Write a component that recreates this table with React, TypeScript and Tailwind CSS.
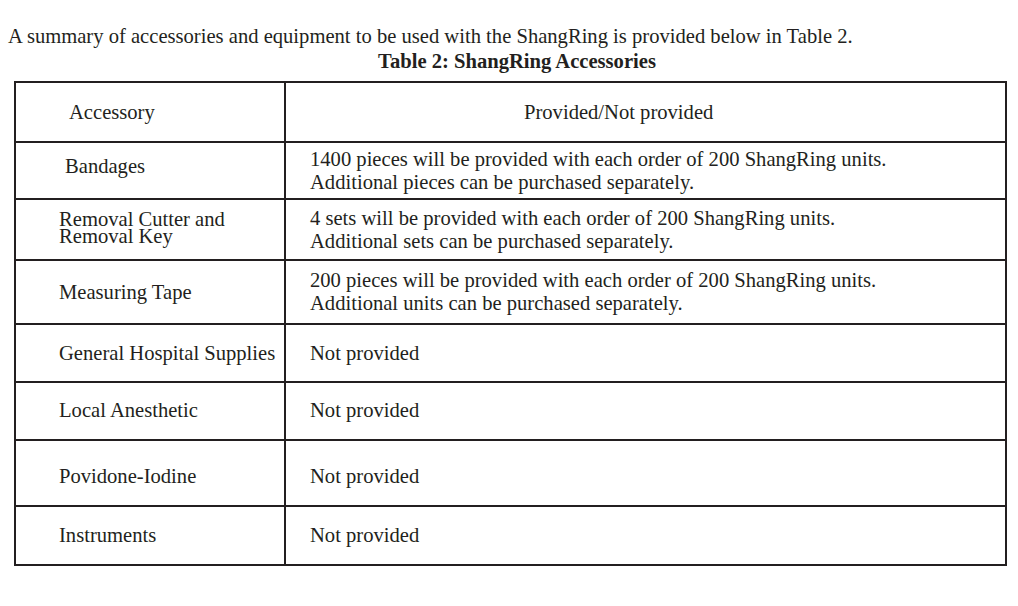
import React from "react";

const rows: { h: string; left: React.ReactNode; right: React.ReactNode; lp: string; shift?: string }[] = [
  { h: "h-[57px]", lp: "pl-[49px]", left: <span className="relative -top-[4px]">Bandages</span>, right: (<><div>1400 pieces will be provided with each order of 200 ShangRing units.</div><div>Additional pieces can be purchased separately.</div></>) },
  { h: "h-[61px]", lp: "pl-[43px]", left: (<div className="leading-[17px] relative -top-[2px]"><div>Removal Cutter and</div><div>Removal Key</div></div>), right: (<><div>4 sets will be provided with each order of 200 ShangRing units.</div><div>Additional sets can be purchased separately.</div></>) },
  { h: "h-[64px]", lp: "pl-[43px]", left: "Measuring Tape", right: (<><div>200 pieces will be provided with each order of 200 ShangRing units.</div><div>Additional units can be purchased separately.</div></>) },
  { h: "h-[58px]", lp: "pl-[43px]", left: "General Hospital Supplies", right: "Not provided" },
  { h: "h-[58px]", lp: "pl-[43px]", left: "Local Anesthetic", right: "Not provided", shift: "-top-[1px]" },
  { h: "h-[66px]", lp: "pl-[43px]", left: "Povidone-Iodine", right: "Not provided", shift: "top-[3px]" },
  { h: "h-[57px]", lp: "pl-[43px]", left: "Instruments", right: "Not provided" },
];

export default function App() {
  return (
    <div className="w-[1018px] h-[606px] bg-white text-[#231f20] text-[20.6px] leading-[23px]" style={{ fontFamily: '"Liberation Serif", "Times New Roman", serif' }}>
      <div className="pt-[25px] pl-[8px] whitespace-nowrap">A summary of accessories and equipment to be used with the ShangRing is provided below in Table 2.</div>
      <div className="text-center font-bold pt-[2px] pl-[16px]">Table 2: ShangRing Accessories</div>
      <div className="ml-[14px] mt-[8px] w-[993px] border-2 border-[#231f20]">
        <div className="flex h-[60px] border-b-2 border-[#231f20]">
          <div className="w-[270px] shrink-0 border-r-2 border-[#231f20] flex items-center pl-[53px]">Accessory</div>
          <div className="flex-1 flex items-center pl-[238px]">Provided/Not provided</div>
        </div>
        {rows.map((r, i) => (
          <div key={i} className={`flex ${r.h} ${i < rows.length - 1 ? "border-b-2 border-[#231f20]" : ""}`}>
            <div className={`w-[270px] shrink-0 border-r-2 border-[#231f20] flex items-center ${r.lp}`}>
              <div className={`relative ${r.shift ?? ""}`}>{r.left}</div>
            </div>
            <div className="flex-1 flex flex-col justify-center pl-[24px] whitespace-nowrap">
              <div className={`relative ${r.shift ?? ""}`}>{r.right}</div>
            </div>
          </div>
        ))}
      </div>
    </div>
  );
}
